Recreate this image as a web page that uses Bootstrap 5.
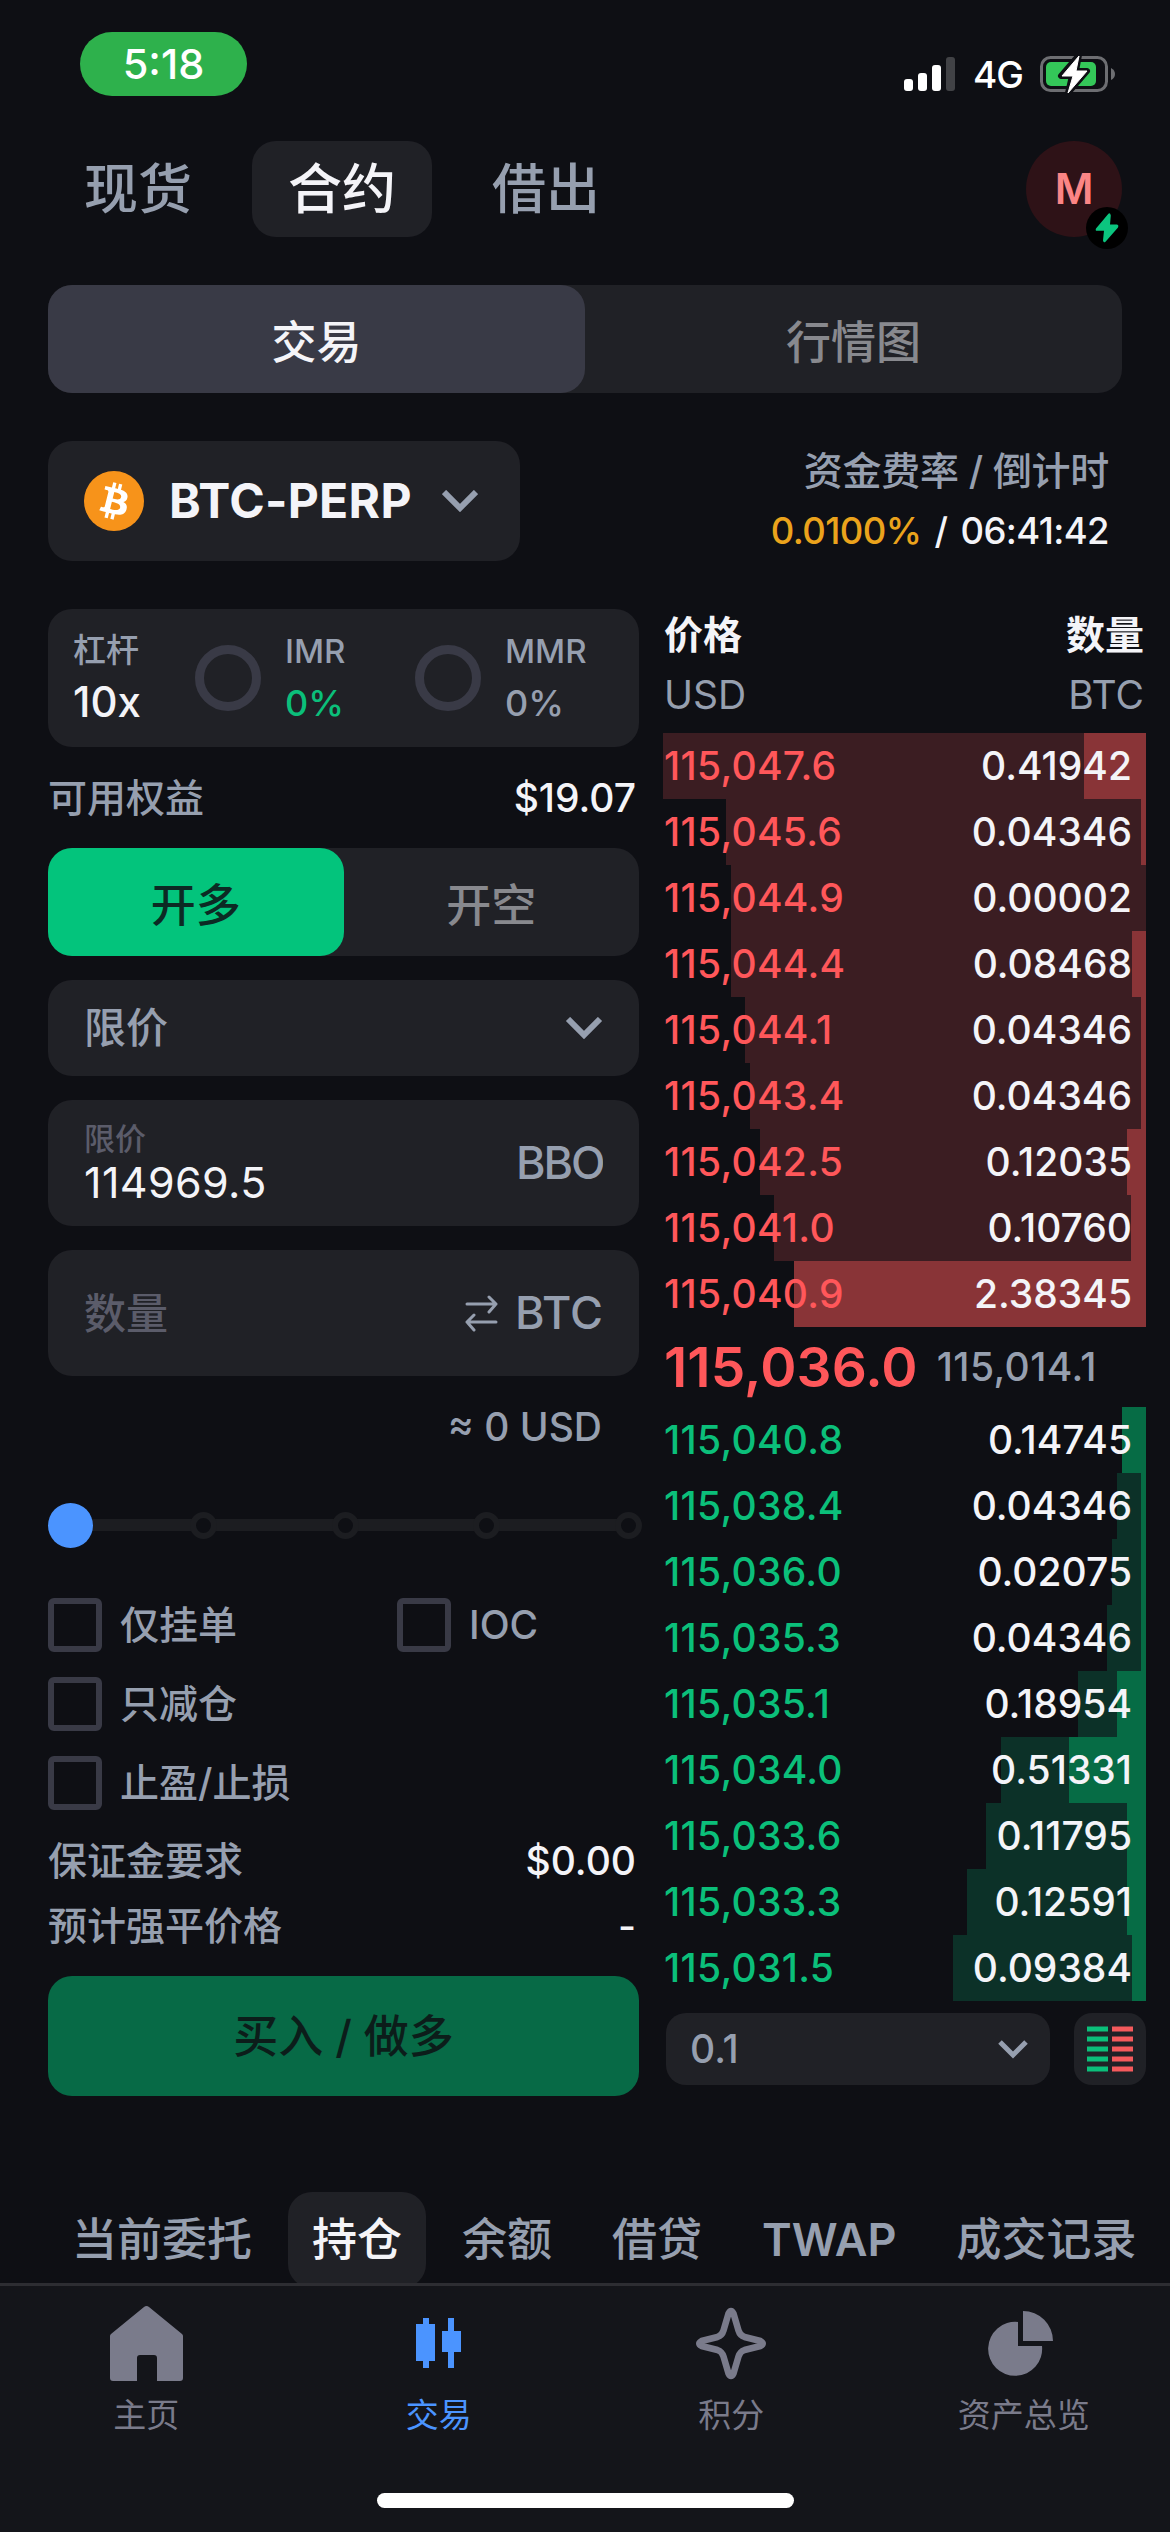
<!DOCTYPE html>
<html lang="zh-CN" data-bs-theme="dark">
<head>
<meta charset="utf-8">
<meta name="viewport" content="width=device-width, initial-scale=1">
<title>BTC-PERP</title>
<link href="https://cdn.jsdelivr.net/npm/bootstrap@5.3.0/dist/css/bootstrap.min.css" rel="stylesheet">
<style>
:root{--panel:#202126;--muted-ink:#969faf;--dim:#5b5c6a;--ink:#f4f4f8;--up:#0bbf7a;--down:#ff575a;--line:#393a46}
html,body{height:2532px;overflow:hidden}
body{background:#0e0f14;color:var(--ink);font-family:Inter,"Noto Sans CJK SC",sans-serif;font-size:39px;line-height:1.2;font-weight:500;width:1170px}
svg{display:block;flex:none}
.screen{height:2532px;width:1170px}
.ink-muted{color:var(--muted-ink)}
.ink-dim{color:var(--dim)}
.ink-up{color:var(--up)}
.ink-down{color:var(--down)}
.statusbar{height:141px;padding:32px 55px 0 80px}
.clock-pill{width:167px;height:64px;border-radius:32px;background:#2eb14c;color:#fff;font-size:41.5px;padding-top:1px}
.status-icons{height:36px;margin-top:24px;gap:17px}
.net{font-size:37px;color:#fff;letter-spacing:-1px;padding-top:3px}
.topnav{height:96px;padding:0 48px}
.topnav .nav-pills{gap:24px}
.topnav .nav-link{height:96px;padding:0 36px;font-size:54px;line-height:98px;border-radius:24px;color:var(--muted-ink)}
.topnav .nav-link.active,.ordertabs .nav-link.active{background:var(--panel);color:var(--ink)}
.avatar{width:96px;height:96px;background:#2e1217;color:#fb8585;font-size:42px;font-weight:600}
.avatar-flag{right:-6px;bottom:-12px;width:42px;height:42px;background:#000}
.seg{height:108px;border-radius:24px;background:var(--panel);color:#88898e;font-size:45px}
.seg>div{border-radius:24px;padding-top:7px}
.seg .on{background:var(--line);color:var(--ink)}
.seg .on-buy{background:#03c47c;color:#0c2a24}
.viewseg{margin:48px 48px 0}
.pairrow{margin:48px 48px 0;height:120px}
.pairbtn{width:472px;background:var(--panel);border-radius:24px;padding:0 42px 0 36px}
.pairname{font-size:48px;font-weight:700;margin-left:25px;letter-spacing:.3px}
.funding{padding:0 13px 0 0;line-height:60px;letter-spacing:-.3px}
.funding .rate{font-size:36.5px;letter-spacing:-.6px;word-spacing:4px}
.ink-rate{color:#eba31c}
.trade{padding:48px 24px 0 48px;height:1535px;gap:24px}
.form-side{width:591px}
.panelbox{background:var(--panel);border-radius:24px}
.lever{height:138px;padding:0 25px 3px;font-size:33px}
.lever .stat{line-height:52px}
.lever .ring{margin-top:3px}
.ring{width:66px;height:66px;border:9px solid var(--line);border-radius:50%}
.pct{font-size:36px}
.kv{padding:0 3px 0 0}
.fieldbox{padding:0 36px}
.slider{height:45px;width:594px;background:linear-gradient(#1c1d21,#1c1d21) 20px 16px/560px 12px no-repeat}
.knob{width:45px;height:45px;border-radius:50%;background:#4b94ff}
.tick{width:27px;height:27px;border:6px solid #1c1d21;background:#0e0f14;border-radius:50%}
.form-check-input.chk[type=checkbox]{width:54px;height:54px;border:6px solid var(--line);border-radius:6px;background:none;margin:0;float:none}
.chk-row{height:54px;gap:18px}
.buybtn{height:120px;border-radius:24px;background:#076a46;color:#0c1d1a;font-size:45px;font-weight:500;border:0;padding:2px 0 0}
.book{width:483px}
.lvl{height:66px;padding:0 14px 0 1px}
.lvl span:first-child{letter-spacing:.3px}
.asks .lvl{background:linear-gradient(#893437,#893437) right/var(--size) 100% no-repeat,linear-gradient(#3b1d22,#3b1d22) right/var(--depth) 100% no-repeat}
.bids .lvl{background:linear-gradient(#066c45,#066c45) right/var(--size) 100% no-repeat,linear-gradient(#0c3128,#0c3128) right/var(--depth) 100% no-repeat}
.lastprice{font-size:55px;font-weight:600;letter-spacing:.1px}
.midrow{height:80px;gap:19px;padding-left:1px}
.markprice{letter-spacing:.4px}
.step{width:384px;height:72px;border-radius:20px;padding:0 22px 0 24px}
.ordertabs{padding:0 48px;height:91px;gap:12px;overflow:hidden}
.ordertabs .nav-link{height:96px;padding:0 24px;border-radius:24px;font-size:45px;line-height:96px;font-weight:500;color:var(--muted-ink)}
.ordertabs .nav-link.latin{font-weight:600}
.tabbar{background:#14151a;border-top:3px solid #2d2d32;height:249px;color:#7a7b8b;font-size:33px;font-weight:400}
.tabbar .item{padding-top:19px}
.tabbar .item.on{color:#4b94ff}
.tabbar .lbl{line-height:44px;margin-top:12px}
.homebar{width:417px;height:15px;border-radius:8px;background:#fff;left:377px;bottom:24px}
</style>
</head>
<body>
<div class="screen d-flex flex-column position-relative">
  <header class="statusbar d-flex justify-content-between align-items-start">
    <div class="clock-pill d-flex align-items-center justify-content-center">5:18</div>
    <div class="status-icons d-flex align-items-center">
      <svg width="52" height="36" viewBox="0 0 52 36" fill="#fff"><rect x="0" y="23" width="9" height="12" rx="3"/><rect x="14" y="17" width="9" height="18" rx="3"/><rect x="28" y="9" width="9" height="26" rx="3"/><rect x="42" y="1" width="9" height="34" rx="3" fill="#414246"/></svg>
      <span class="net">4G</span>
      <svg width="75" height="38" viewBox="0 0 75 38"><rect x="1.5" y="2.5" width="65" height="33" rx="9" fill="none" stroke="#6d6e72" stroke-width="3"/><path d="M71 13q4 2 4 6t-4 6z" fill="#6d6e72"/><rect x="6" y="7" width="50" height="24" rx="5" fill="#34c759"/><path d="M39 0 21 21h11l-4 17 19-22H36z" fill="#fff" stroke="#0e0f14" stroke-width="6" stroke-linejoin="round"/><path d="M39 1 22 21h11l-5 17 19-22H36z" fill="#fff" stroke="#fff" stroke-linejoin="round"/></svg>
    </div>
  </header>

  <nav class="topnav d-flex justify-content-between">
    <div class="nav nav-pills flex-nowrap">
      <a class="nav-link">现货</a><a class="nav-link active">合约</a><a class="nav-link">借出</a>
    </div>
    <div class="avatar rounded-circle d-flex align-items-center justify-content-center position-relative">M
      <span class="avatar-flag position-absolute rounded-circle d-flex align-items-center justify-content-center">
        <svg width="26" height="32" viewBox="0 0 26 28" preserveAspectRatio="none"><path d="M14 2 2 14.500q-1 2 1 2h7L9 25q.5 2.500 2.500 1L24 13.500q1-2-1-2.500h-7l.8-8Q16 0 14 2z" fill="#0bc57f"/></svg>
      </span>
    </div>
  </nav>

  <div class="seg viewseg d-flex">
    <div class="on flex-fill w-50 d-flex align-items-center justify-content-center">交易</div>
    <div class="flex-fill w-50 d-flex align-items-center justify-content-center">行情图</div>
  </div>

  <div class="pairrow d-flex justify-content-between">
    <div class="pairbtn d-flex align-items-center">
      <svg width="60" height="60" viewBox="0 0 32 32"><circle cx="16" cy="16" r="16" fill="#f7931a"/><path fill="#fff" d="M23.189 14.020c.314-2.096-1.283-3.223-3.465-3.975l.708-2.840-1.728-.430-.690 2.765c-.454-.114-.920-.220-1.385-.326l.695-2.783L15.596 6l-.708 2.839c-.376-.086-.746-.170-1.104-.260l.002-.009-2.384-.595-.460 1.846s1.283.294 1.256.312c.700.175.826.638.805 1.006l-.806 3.235c.048.012.110.030.180.057l-.183-.045-1.130 4.532c-.086.212-.303.531-.793.410.018.025-1.256-.313-1.256-.313l-.858 1.978 2.250.561c.418.105.828.215 1.231.318l-.715 2.872 1.727.430.708-2.840c.472.127.930.245 1.378.357l-.706 2.828 1.728.430.715-2.866c2.948.558 5.164.333 6.097-2.333.752-2.146-.037-3.385-1.588-4.192 1.130-.260 1.980-1.003 2.207-2.538zm-3.950 5.538c-.533 2.147-4.148.986-5.320.695l.950-3.805c1.172.293 4.929.872 4.370 3.110zm.535-5.569c-.487 1.953-3.495.960-4.470.717l.860-3.450c.975.243 4.118.696 3.610 2.733z"/></svg>
      <span class="pairname">BTC-PERP</span>
      <svg class="ms-auto" width="36" height="22" viewBox="0 0 36 22" fill="none" stroke="#969faf" stroke-width="6"><path d="M2 2l16 16L34 2"/></svg>
    </div>
    <div class="funding text-end">
      <div class="ink-muted">资金费率 / 倒计时</div>
      <div class="rate"><span class="ink-rate">0.0100%</span> / 06:41:42</div>
    </div>
  </div>

  <main class="trade d-flex">
    <section class="form-side d-flex flex-column">
      <div class="panelbox lever d-flex align-items-center">
        <div class="stat" style="width:122px;padding-bottom:2px"><div class="ink-muted">杠杆</div><div style="font-size:42px">10x</div></div>
        <div class="ring"></div>
        <div class="stat ink-muted" style="width:154px;padding-left:24px"><div>IMR</div><div class="pct ink-up">0%</div></div>
        <div class="ring"></div>
        <div class="stat ink-muted" style="padding-left:24px"><div>MMR</div><div class="pct">0%</div></div>
      </div>
      <div class="kv d-flex justify-content-between align-items-center" style="height:101px;padding-top:1px"><span class="ink-muted">可用权益</span><span>$19.07</span></div>
      <div class="seg d-flex">
        <div class="on-buy w-50 d-flex align-items-center justify-content-center">开多</div>
        <div class="w-50 d-flex align-items-center justify-content-center">开空</div>
      </div>
      <div class="panelbox fieldbox ink-muted d-flex align-items-center justify-content-between" style="height:96px;margin-top:24px;font-size:42px">
        <span>限价</span>
        <svg width="38" height="22" viewBox="0 0 38 22" fill="none" stroke="#969faf" stroke-width="6"><path d="M3 2l16 16L35 2"/></svg>
      </div>
      <div class="panelbox fieldbox d-flex align-items-center justify-content-between" style="height:126px;margin-top:24px">
        <div style="line-height:50px;padding-top:2px"><div class="ink-dim" style="font-size:31px;line-height:36px">限价</div><div style="font-size:43px;font-weight:400;letter-spacing:.4px">114969.5</div></div>
        <div class="ink-muted overflow-hidden" style="font-size:45px;width:87px;letter-spacing:-2px">BBO</div>
      </div>
      <div class="panelbox fieldbox d-flex align-items-center justify-content-between" style="height:126px;margin-top:24px">
        <span class="ink-dim" style="font-size:42px;padding-top:3px">数量</span>
        <span class="ink-muted d-flex align-items-center" style="font-size:45px;gap:17px">
          <svg width="33" height="37" viewBox="0 0 33 37" fill="none" stroke="#969faf" stroke-width="3" stroke-linecap="round" stroke-linejoin="round"><path d="M2 9h29M24 2l7 7-7 8M31 27H2M9 20l-7 7 7 8"/></svg>BTC</span>
      </div>
      <div class="ink-muted text-end" style="height:102px;line-height:102px;padding-right:37px">≈ 0 USD</div>
      <div class="slider d-flex align-items-center justify-content-between" style="margin-top:25px">
        <div class="knob"></div><div style="width:42px"></div>
        <div class="d-flex justify-content-between" style="width:452px"><div class="tick"></div><div class="tick"></div><div class="tick"></div><div class="tick"></div></div>
      </div>
      <div class="d-flex" style="margin-top:50px">
        <label class="chk-row ink-muted d-flex align-items-center" style="width:349px"><input type="checkbox" class="form-check-input chk">仅挂单</label>
        <label class="chk-row ink-muted d-flex align-items-center"><input type="checkbox" class="form-check-input chk">IOC</label>
      </div>
      <label class="chk-row ink-muted d-flex align-items-center" style="margin-top:25px"><input type="checkbox" class="form-check-input chk">只减仓</label>
      <label class="chk-row ink-muted d-flex align-items-center" style="margin-top:25px"><input type="checkbox" class="form-check-input chk">止盈/止损</label>
      <div class="kv d-flex justify-content-between align-items-center" style="margin-top:19px;height:65px"><span class="ink-muted">保证金要求</span><span>$0.00</span></div>
      <div class="kv d-flex justify-content-between align-items-center" style="height:65px"><span class="ink-muted">预计强平价格</span><span>-</span></div>
      <button class="buybtn btn w-100" style="margin-top:17px">买入 / 做多</button>
    </section>

    <section class="book">
      <div class="d-flex justify-content-between" style="height:124px;padding:0 2px 0 1px;line-height:60px;margin-top:-4px">
        <div><div class="fw-bold">价格</div><div class="ink-muted fw-normal">USD</div></div>
        <div class="text-end"><div class="fw-bold">数量</div><div class="ink-muted fw-normal">BTC</div></div>
      </div>
      <div class="asks" style="margin-top:4px">
        <div class="lvl d-flex justify-content-between align-items-center" style="--depth:483px;--size:62px"><span class="ink-down">115,047.6</span><span>0.41942</span></div>
        <div class="lvl d-flex justify-content-between align-items-center" style="--depth:420px;--size:5px"><span class="ink-down">115,045.6</span><span>0.04346</span></div>
        <div class="lvl d-flex justify-content-between align-items-center" style="--depth:415px;--size:0px"><span class="ink-down">115,044.9</span><span>0.00002</span></div>
        <div class="lvl d-flex justify-content-between align-items-center" style="--depth:415px;--size:14px"><span class="ink-down">115,044.4</span><span>0.08468</span></div>
        <div class="lvl d-flex justify-content-between align-items-center" style="--depth:401px;--size:5px"><span class="ink-down">115,044.1</span><span>0.04346</span></div>
        <div class="lvl d-flex justify-content-between align-items-center" style="--depth:396px;--size:5px"><span class="ink-down">115,043.4</span><span>0.04346</span></div>
        <div class="lvl d-flex justify-content-between align-items-center" style="--depth:386px;--size:19px"><span class="ink-down">115,042.5</span><span>0.12035</span></div>
        <div class="lvl d-flex justify-content-between align-items-center" style="--depth:372px;--size:15px"><span class="ink-down">115,041.0</span><span>0.10760</span></div>
        <div class="lvl d-flex justify-content-between align-items-center" style="--depth:352px;--size:352px"><span class="ink-down">115,040.9</span><span>2.38345</span></div>
      </div>
      <div class="midrow d-flex align-items-center"><span class="lastprice ink-down">115,036.0</span><span class="ink-muted markprice">115,014.1</span></div>
      <div class="bids">
        <div class="lvl d-flex justify-content-between align-items-center" style="--depth:24px;--size:24px"><span class="ink-up">115,040.8</span><span>0.14745</span></div>
        <div class="lvl d-flex justify-content-between align-items-center" style="--depth:29px;--size:5px"><span class="ink-up">115,038.4</span><span>0.04346</span></div>
        <div class="lvl d-flex justify-content-between align-items-center" style="--depth:34px;--size:5px"><span class="ink-up">115,036.0</span><span>0.02075</span></div>
        <div class="lvl d-flex justify-content-between align-items-center" style="--depth:39px;--size:5px"><span class="ink-up">115,035.3</span><span>0.04346</span></div>
        <div class="lvl d-flex justify-content-between align-items-center" style="--depth:68px;--size:29px"><span class="ink-up">115,035.1</span><span>0.18954</span></div>
        <div class="lvl d-flex justify-content-between align-items-center" style="--depth:145px;--size:77px"><span class="ink-up">115,034.0</span><span>0.51331</span></div>
        <div class="lvl d-flex justify-content-between align-items-center" style="--depth:160px;--size:19px"><span class="ink-up">115,033.6</span><span>0.11795</span></div>
        <div class="lvl d-flex justify-content-between align-items-center" style="--depth:179px;--size:19px"><span class="ink-up">115,033.3</span><span>0.12591</span></div>
        <div class="lvl d-flex justify-content-between align-items-center" style="--depth:193px;--size:14px"><span class="ink-up">115,031.5</span><span>0.09384</span></div>
      </div>
      <div class="d-flex justify-content-between" style="padding:12px 0 0 3px">
        <div class="panelbox step ink-muted d-flex align-items-center justify-content-between"><span>0.1</span>
          <svg width="30" height="19" viewBox="0 0 30 19" fill="none" stroke="#969faf" stroke-width="5"><path d="M2 2l13 13L28 2"/></svg></div>
        <div class="panelbox d-flex align-items-center justify-content-center" style="width:72px;height:72px;border-radius:18px">
          <svg width="46" height="46" viewBox="0 0 46 46" stroke-width="5"><path stroke="#0bbf7a" d="M0 3h21M0 13h21M0 23h21M0 33h21M0 43h21"/><path stroke="#f55a5c" d="M25 3h21M25 13h21M25 23h21M25 33h21M25 43h21"/></svg>
        </div>
      </div>
    </section>
  </main>

  <nav class="ordertabs nav flex-nowrap mt-auto">
    <a class="nav-link text-nowrap">当前委托</a><a class="nav-link text-nowrap active">持仓</a><a class="nav-link text-nowrap">余额</a><a class="nav-link text-nowrap">借贷</a><a class="nav-link text-nowrap latin">TWAP</a><a class="nav-link text-nowrap">成交记录</a>
  </nav>

  <footer class="tabbar d-flex flex-shrink-0">
    <div class="item col-3 d-flex flex-column align-items-center">
      <svg width="73" height="76" viewBox="0 0 73 76"><path fill="currentColor" d="M34 2q2.500-2 5 0l33 27q1 1 1 2v42q0 3-3 3H47V53q0-3-3-3H30q-3 0-3 3v23H3q-3 0-3-3V31q0-1 1-2z"/></svg>
      <div class="lbl">主页</div>
    </div>
    <div class="item on col-3 d-flex flex-column align-items-center">
      <svg width="45" height="76" viewBox="0 0 45 76"><path fill="currentColor" d="M7 13h6v6h6v37h-6v7H7v-7H0V19h7zM32 13h6v13h7v21h-7v16h-6V47h-6V26h6z"/></svg>
      <div class="lbl">交易</div>
    </div>
    <div class="item col-3 d-flex flex-column align-items-center">
      <svg width="70" height="76" viewBox="0 0 70 76" fill="none" stroke="currentColor" stroke-width="6.500" stroke-linejoin="round"><path d="M32.500 8.500q2.500-5 5 0l5 17q1.500 5 6 6.500l16 4q4.500 2.500 0 5l-16 4q-4.500 1.500-6 6.500l-5 17q-2.500 5-5 0l-5-17q-1.500-5-6-6.500l-16-4q-4.500-2.500 0-5l16-4q4.500-1.500 6-6.500z"/></svg>
      <div class="lbl">积分</div>
    </div>
    <div class="item col-3 d-flex flex-column align-items-center">
      <svg width="71" height="76" viewBox="0 0 71 76" fill="currentColor"><path d="M30 17v24h24a27 27 0 1 1-24-24zM35 6a30 30 0 0 1 30 30H35z"/></svg>
      <div class="lbl">资产总览</div>
    </div>
  </footer>
  <div class="homebar position-absolute"></div>
</div>
<script src="https://cdn.jsdelivr.net/npm/bootstrap@5.3.0/dist/js/bootstrap.bundle.min.js"></script>
</body>
</html>
